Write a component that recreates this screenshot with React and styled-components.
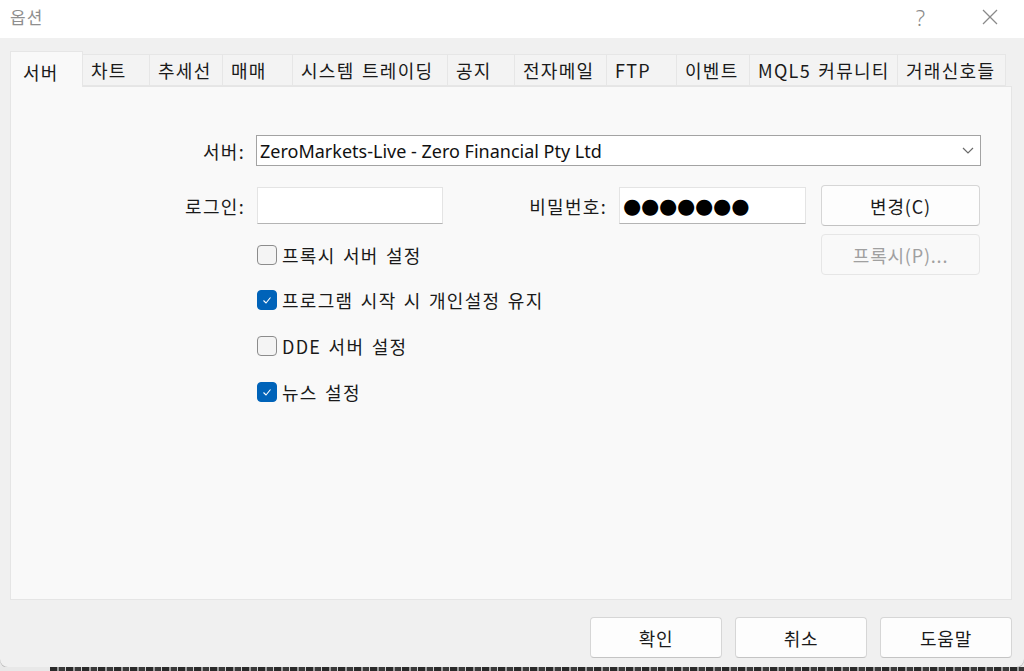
import React from "react";
import styled, { createGlobalStyle } from "styled-components";

const GlobalStyle = createGlobalStyle`
  html, body {
    margin: 0;
    padding: 0;
    background: #e9e9e9;
  }
  body {
    font-family: "Noto Sans", "Noto Sans CJK KR", sans-serif;
  }
`;

const tabs = [
  { label: "서버", width: 73 },
  { label: "차트", width: 67 },
  { label: "추세선", width: 73 },
  { label: "매매", width: 70 },
  { label: "시스템 트레이딩", width: 155 },
  { label: "공지", width: 67 },
  { label: "전자메일", width: 92 },
  { label: "FTP", width: 70 },
  { label: "이벤트", width: 73 },
  { label: "MQL5 커뮤니티", width: 148 },
  { label: "거래신호들", width: 108 },
];

const options = [
  { label: "프록시 서버 설정", checked: false },
  { label: "프로그램 시작 시 개인설정 유지", checked: true },
  { label: "DDE 서버 설정", checked: false },
  { label: "뉴스 설정", checked: true },
];

const App = () => {
  return (
    <>
      <GlobalStyle />
      <Dialog>
        <TitleBar>
          <Title>옵션</Title>
          <TitleActions>
            <HelpMark>?</HelpMark>
            <CloseIcon viewBox="0 0 16 16">
              <line x1="1" y1="1" x2="15" y2="15" />
              <line x1="15" y1="1" x2="1" y2="15" />
            </CloseIcon>
          </TitleActions>
        </TitleBar>
        <Body>
          <TabRow>
            {tabs.map((t, i) => (
              <Tab key={t.label} $width={t.width} $active={i === 0}>
                {t.label}
              </Tab>
            ))}
          </TabRow>
          <Panel>
            <Form>
              <Label>서버:</Label>
              <Select>
                <span>ZeroMarkets-Live - Zero Financial Pty Ltd</span>
                <Chevron viewBox="0 0 12 7">
                  <polyline points="1,1 6,6 11,1" />
                </Chevron>
              </Select>

              <Label $row="end">로그인:</Label>
              <Input $row="end" />
              <Label $row="end">비밀번호:</Label>
              <Input $row="end" $wide>
                <Dots>●●●●●●●</Dots>
              </Input>
              <Button $row="end">변경(C)</Button>

              {options.map((o, i) => (
                <CheckRow key={o.label} $first={i === 0}>
                  <Box $checked={o.checked}>
                    {o.checked && (
                      <svg viewBox="0 0 12 12" width="12" height="12">
                        <polyline points="2.5,6.5 5,9 9.5,3.5" />
                      </svg>
                    )}
                  </Box>
                  {o.label}
                </CheckRow>
              ))}
              <ProxyButton disabled>프록시(P)...</ProxyButton>
            </Form>
          </Panel>
          <Footer>
            <FooterButton>확인</FooterButton>
            <FooterButton>취소</FooterButton>
            <FooterButton>도움말</FooterButton>
          </Footer>
        </Body>
      </Dialog>
      <BehindStrip>
        <StripLight />
        <StripDark />
      </BehindStrip>
    </>
  );
};

const korean = `
  font-family: "Noto Sans CJK KR", "Noto Sans", sans-serif;
  font-size: 18px;
  letter-spacing: 1.3px;
  word-spacing: 2px;
`;

const Dialog = styled.div`
  width: 1024px;
  height: 667px;
  display: flex;
  flex-direction: column;
  border-radius: 0 0 8px 8px;
  overflow: hidden;
  background: #f0f0f0;
  box-shadow: 0 1px 0 #b8b8b8;
`;

const TitleBar = styled.div`
  height: 38px;
  flex: none;
  background: #ffffff;
  display: flex;
  align-items: center;
  justify-content: space-between;
  padding: 0 26px 0 10px;
  font-family: "Noto Sans CJK KR", sans-serif;
`;

const Title = styled.div`
  font-size: 17px;
  letter-spacing: 1px;
  color: #8f8f8f;
  line-height: 20px;
  margin-top: -4px;
`;

const TitleActions = styled.div`
  display: flex;
  align-items: center;
  gap: 57px;
  margin-top: -4px;
`;

const HelpMark = styled.span`
  font-family: "Noto Sans", sans-serif;
  font-size: 22px;
  font-weight: 300;
  line-height: 22px;
  color: #8a8a8a;
`;

const CloseIcon = styled.svg`
  width: 16px;
  height: 16px;
  stroke: #8a8a8a;
  stroke-width: 1.2;
`;

const Body = styled.div`
  flex: 1;
  display: flex;
  flex-direction: column;
  padding: 13px 12px 9px 10px;
  font-family: "Noto Sans", "Noto Sans CJK KR", sans-serif;
  color: #1a1a1a;
`;

const TabRow = styled.div`
  display: flex;
  align-items: flex-end;
  height: 35px;
  position: relative;
  z-index: 1;
`;

const Tab = styled.div`
  ${korean}
  width: ${(p) => p.$width}px;
  box-sizing: border-box;
  height: ${(p) => (p.$active ? 36 : 32)}px;
  margin-bottom: ${(p) => (p.$active ? -1 : 0)}px;
  padding: ${(p) => (p.$active ? "4px 0 0 12px" : "0 0 0 8px")};
  display: flex;
  align-items: center;
  white-space: nowrap;
  overflow: hidden;
  background: ${(p) => (p.$active ? "#f9f9f9" : "#f3f3f3")};
  border: 1px solid #e6e6e6;
  border-bottom: ${(p) => (p.$active ? "none" : "1px solid #e6e6e6")};
  border-left: ${(p) => (p.$active ? "1px solid #e6e6e6" : "none")};
  color: #1a1a1a;
`;

const Panel = styled.div`
  height: 514px;
  box-sizing: border-box;
  background: #f9f9f9;
  border: 1px solid #e5e5e5;
  padding-top: 48px;
`;

const Form = styled.div`
  display: grid;
  grid-template-columns: 234px 186px 152px 190px 159px;
  grid-template-rows: 31px 60px 49px 48px 46px 46px;
  column-gap: 12px;
`;

const Label = styled.div`
  ${korean}
  justify-self: end;
  align-self: ${(p) => (p.$row === "end" ? "end" : "center")};
  height: ${(p) => (p.$row === "end" ? "41px" : "auto")};
  display: flex;
  align-items: center;
  color: #1a1a1a;
`;

const Select = styled.div`
  grid-column: 2 / 6;
  margin-left: -1px;
  width: 725px;
  box-sizing: border-box;
  height: 31px;
  background: #ffffff;
  border: 1px solid #a3a3a3;
  display: flex;
  align-items: center;
  justify-content: space-between;
  padding: 0 6px 0 3px;
  font-size: 18px;
  color: #111;
`;

const Chevron = styled.svg`
  width: 12px;
  height: 7px;
  fill: none;
  stroke: #6a6a6a;
  stroke-width: 1.2;
`;

const Input = styled.div`
  align-self: end;
  margin-bottom: 2px;
  width: ${(p) => (p.$wide ? 187 : 186)}px;
  height: 37px;
  box-sizing: border-box;
  background: #ffffff;
  border: 1px solid #e4e4e4;
  border-bottom-color: #b4b4b4;
  display: flex;
  align-items: center;
  padding-left: 3px;
`;

const Dots = styled.span`
  font-family: "DejaVu Sans", sans-serif;
  font-size: 21px;
  letter-spacing: -0.3px;
  color: #000;
`;

const buttonBase = `
  ${korean}
  letter-spacing: 0.8px;
  box-sizing: border-box;
  border-radius: 4px;
  display: flex;
  align-items: center;
  justify-content: center;
`;

const Button = styled.div`
  ${buttonBase}
  align-self: end;
  width: 159px;
  height: 41px;
  background: #fdfdfd;
  border: 1px solid #d6d6d6;
  border-bottom-color: #c2c2c2;
  color: #1a1a1a;
`;

const ProxyButton = styled.div`
  ${buttonBase}
  grid-column: 5;
  grid-row: 3;
  align-self: end;
  width: 159px;
  height: 41px;
  background: #f9f9f9;
  border: 1px solid #e6e6e6;
  color: #a0a0a0;
`;

const CheckRow = styled.div`
  ${korean}
  grid-column: 2 / 5;
  align-self: end;
  height: ${(p) => (p.$first ? 41 : 46)}px;
  display: flex;
  align-items: center;
  gap: 5px;
  color: #1a1a1a;
  white-space: nowrap;
`;

const Box = styled.div`
  width: 20px;
  height: 20px;
  box-sizing: border-box;
  border-radius: 4px;
  display: flex;
  align-items: center;
  justify-content: center;
  background: ${(p) => (p.$checked ? "#0063b9" : "#f4f4f4")};
  border: 1px solid ${(p) => (p.$checked ? "#0063b9" : "#8c8c8c")};

  svg {
    fill: none;
    stroke: #ffffff;
    stroke-width: 1.1;
  }
`;

const Footer = styled.div`
  display: flex;
  justify-content: flex-end;
  gap: 13px;
  margin-top: 17px;
`;

const FooterButton = styled.div`
  ${buttonBase}
  width: 132px;
  height: 41px;
  background: #fdfdfd;
  border: 1px solid #d6d6d6;
  border-bottom-color: #c4c4c4;
  color: #1a1a1a;
`;

const BehindStrip = styled.div`
  display: flex;
  height: 4px;
`;

const StripLight = styled.div`
  width: 50px;
  background: #e8e8e8;
`;

const StripDark = styled.div`
  flex: 1;
  background: repeating-linear-gradient(
    90deg,
    #2a2a2a 0 7px,
    #9a9a9a 7px 9px,
    #3a3a3a 9px 15px,
    #cfcfcf 15px 16px
  );
`;

export default App;
